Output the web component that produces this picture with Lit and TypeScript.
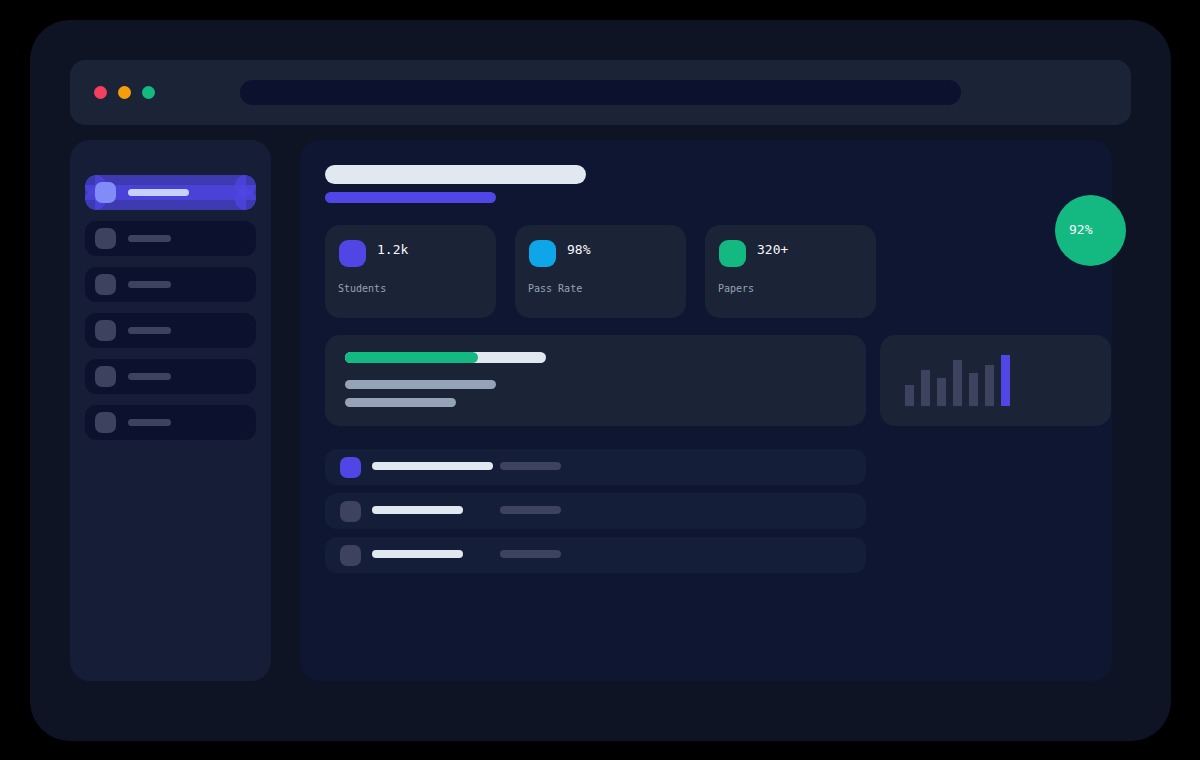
import { LitElement, html, css } from "lit";
import { customElement } from "lit/decorators.js";
import { classMap } from "lit/directives/class-map.js";

const stats = [
  { value: "1.2k", label: "Students", tone: "indigo" },
  { value: "98%", label: "Pass Rate", tone: "sky" },
  { value: "320+", label: "Papers", tone: "green" },
];
const chart = [21, 36, 28, 46, 33, 41, 51];
const progress = 66;
const nav = ["Overview", "Courses", "Exams", "Papers", "Reports", "Settings"];

@customElement("app-root")
export class AppRoot extends LitElement {
  static styles = css`
    :host {
      display: block;
      position: relative;
      min-height: 100vh;
      box-sizing: border-box;
      padding: 20px 29px 19px 30px;
      background: #000;
      font-family: "DejaVu Sans Mono", monospace;
      color: #f8fafc;
    }
    * { box-sizing: border-box; }
    .frame {
      min-height: calc(100vh - 39px);
      border-radius: 40px;
      background: #0e1424;
      padding: 40px 40px 60px;
      display: flex;
      flex-direction: column;
      gap: 15px;
    }
    .topbar {
      height: 65px;
      flex: none;
      border-radius: 15px;
      background: #1b2336;
      display: grid;
      grid-template-columns: 146px 1fr 146px;
      align-items: center;
      padding: 0 24px;
    }
    .dots { display: flex; gap: 11px; }
    .dot { width: 13px; height: 13px; padding: 0; border: 0; border-radius: 50%; }
    .close { background: #f43f5e; }
    .min { background: #f59e0b; }
    .max { background: #13b981; }
    .address {
      width: 100%;
      height: 25px;
      border: 0;
      border-radius: 13px;
      background: #0c122e;
      padding: 0 13px;
      font: inherit;
      color: inherit;
      outline: none;
    }
    .body { flex: 1; display: flex; gap: 29px; padding-right: 19px; }
    .sidebar {
      width: 201px;
      flex: none;
      border-radius: 20px;
      background: #161e37;
      padding: 35px 15px;
      display: flex;
      flex-direction: column;
      gap: 11px;
    }
    .item {
      height: 35px;
      border-radius: 11px;
      background: #0c122e;
      display: flex;
      align-items: center;
      gap: 12px;
      padding: 0 10px;
    }
    .line { display: block; border-radius: 6px; background: #3d425f; flex: none; }
    .icon { display: block; width: 21px; height: 21px; border-radius: 7px; background: #3d425f; flex: none; }
    .item .line { width: 43px; height: 7px; }
    .item.active {
      --tint: rgba(79, 70, 229, 0.7);
      --disc: radial-gradient(circle closest-side, var(--tint) 98%, transparent);
      background:
        var(--disc) left top / 21px 21px,
        var(--disc) right top / 21px 21px,
        var(--disc) left bottom / 21px 21px,
        var(--disc) right bottom / 21px 21px,
        linear-gradient(var(--tint), var(--tint)) center / calc(100% - 20px) 100%,
        linear-gradient(var(--tint), var(--tint)) center / 100% 15px;
      background-repeat: no-repeat;
    }
    .item.active .icon { background: #818cf8; }
    .item.active .line { width: 61px; background: #c9d0fb; }
    .main {
      flex: 1;
      min-width: 0;
      border-radius: 20px;
      background: #0f1631;
      padding: 25px 1px 25px 25px;
    }
    .title { width: 261px; height: 19px; border-radius: 10px; background: #e2e8f0; margin-bottom: 8px; }
    .subtitle { width: 171px; height: 11px; border-radius: 6px; background: #4f46e5; margin-bottom: 22px; }
    .stats { display: flex; gap: 19px; margin-bottom: 17px; }
    .stat {
      width: 171px;
      height: 93px;
      border-radius: 15px;
      background: #1b2336;
      padding: 15px 13px;
    }
    .head { display: flex; gap: 11px; height: 27px; padding-left: 1px; margin-bottom: 15px; }
    .swatch { width: 27px; height: 27px; border-radius: 9px; flex: none; }
    .indigo { background: #4f46e5; }
    .sky { background: #0ea5e9; }
    .green { background: #13b981; }
    .value { font-size: 13px; line-height: 20px; }
    .label { font-size: 10px; line-height: 14px; color: #94a3b8; }
    .panels { display: grid; grid-template-columns: 541fr 231fr; gap: 23px 14px; }
    .panel { height: 91px; border-radius: 15px; background: #1b2336; }
    .summary { padding: 17px 20px; }
    .track { width: 201px; height: 11px; border-radius: 6px; background: #e2e8f0; margin-bottom: 17px; }
    .fill { height: 11px; border-radius: 6px; background: #13b981; }
    .summary .line { height: 9px; background: #94a3b8; margin-bottom: 9px; }
    .summary .long { width: 151px; }
    .summary .short { width: 111px; }
    .chart { padding: 20px 25px; display: flex; align-items: flex-end; gap: 7px; }
    .bar { width: 9px; background: #3d425f; }
    .bar.on { background: #4f46e5; }
    .list { margin: 0; padding: 0; list-style: none; display: flex; flex-direction: column; gap: 8px; }
    .row {
      height: 36px;
      border-radius: 12px;
      background: #151e38;
      display: grid;
      grid-template-columns: 32px 128px 61px;
      align-items: start;
      padding: 8px 15px;
    }
    .row .line { height: 8px; margin-top: 5px; width: 61px; }
    .row .name { width: 91px; background: #e2e8f0; }
    .row.first .name { width: 121px; }
    .row.first .icon { background: #4f46e5; }
    .badge {
      position: absolute;
      top: 195px;
      right: 74px;
      width: 71px;
      height: 71px;
      border-radius: 50%;
      background: #13b981;
      padding: 25px 14px;
      font-size: 13px;
      line-height: 20px;
    }
  `;

  render() {
    return html`
      <div class="frame">
        <header class="topbar">
          <div class="dots">
            <button class="dot close" aria-label="Close"></button>
            <button class="dot min" aria-label="Minimize"></button>
            <button class="dot max" aria-label="Maximize"></button>
          </div>
          <input class="address" type="text" aria-label="Address" />
        </header>
        <div class="body">
          <nav class="sidebar">
            ${nav.map((name, i) => html`
              <a href="#" aria-label=${name} class=${classMap({ item: true, active: i === 0 })}>
                <span class="icon"></span><span class="line"></span>
              </a>`)}
          </nav>
          <main class="main">
            <div class="title"></div>
            <div class="subtitle"></div>
            <section class="stats">
              ${stats.map((s) => html`
                <article class="stat">
                  <div class="head">
                    <span class="swatch ${s.tone}"></span>
                    <span class="value">${s.value}</span>
                  </div>
                  <div class="label">${s.label}</div>
                </article>`)}
            </section>
            <div class="panels">
              <section class="panel summary">
                <div class="track"><div class="fill" style="width:${progress}%"></div></div>
                <span class="line long"></span>
                <span class="line short"></span>
              </section>
              <section class="panel chart">
                ${chart.map((h, i) => html`
                  <div class=${classMap({ bar: true, on: i === chart.length - 1 })} style="height:${h}px"></div>`)}
              </section>
              <ul class="list">
                ${[0, 1, 2].map((i) => html`
                  <li class=${classMap({ row: true, first: i === 0 })}>
                    <span class="icon"></span><span class="line name"></span><span class="line"></span>
                  </li>`)}
              </ul>
            </div>
          </main>
        </div>
      </div>
      <div class="badge">92%</div>
    `;
  }
}
